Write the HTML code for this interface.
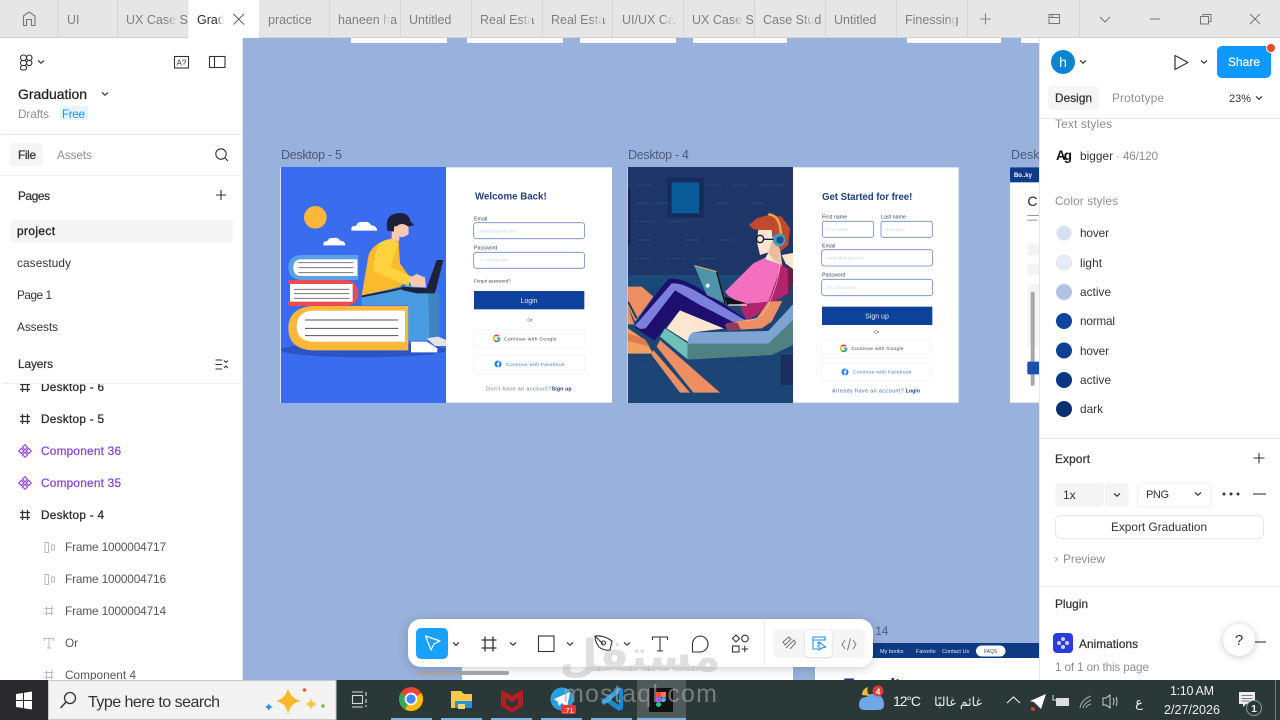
<!DOCTYPE html>
<html lang="en"><head><meta charset="utf-8"><title>Figma - Graduation</title>
<style>
html,body{margin:0;padding:0;width:1280px;height:720px;overflow:hidden;background:#98b2dd}
svg{display:block;position:absolute;left:0;top:0}
text{font-family:"Liberation Sans","DejaVu Sans",sans-serif;font-size:11.8px;fill:#333;white-space:pre}
.g{fill:#8f8f8f}.m{stroke:#333;stroke-width:.25}.b{font-weight:bold}
.tab{fill:#7f7f7f;font-size:12.5px}
.i{fill:none;stroke:#333;stroke-width:1.1}
.li{fill:none;stroke:#bbb;stroke-width:1}
.f{fill:#2e2e2e;stroke:#2e2e2e;stroke-width:.3}
.c{fill:#8a3fe0;stroke:#8a3fe0;stroke-width:.25}
.u{fill:#4a4a4a;font-size:15px}
.bl{fill:#3b82d6;font-size:15px}
.ph{fill:#cdd7e8;font-size:14px}
.lb{fill:#3a4a66;font-size:16px}
.w{fill:#fff}
</style></head><body>
<svg width="1280" height="720" viewBox="0 0 1280 720" xmlns="http://www.w3.org/2000/svg">
<defs>
<path id="ch" d="M-3-1.600 0 1.200 3-1.600" fill="none" stroke="#333" stroke-width="1.200"/>
<g id="fr"><path d="M-2.500-5V5M2.500-5V5M-5-2.500H5M-5 2.500H5" fill="none" stroke="#333" stroke-width="1.300"/></g>
<g id="frb"><path d="M-4-7.500V7.500M4-7.500V7.500M-7.500-4H7.500M-7.500 4H7.500" fill="none" stroke="#333" stroke-width="1.300"/></g>
<g id="frl"><path d="M-2.500-4.500V4.500M2.500-4.500V4.500M-4.500-2.500H4.500M-4.500 2.500H4.500" fill="none" stroke="#bbb" stroke-width="1"/></g>
<g id="cmp"><g fill="none" stroke="#8a3fe0" stroke-width="1.100"><rect x="-1.800" y="-5.500" width="3.600" height="3.600" transform="rotate(45 0 -3.700)"/><rect x="-1.800" y="1.900" width="3.600" height="3.600" transform="rotate(45 0 3.700)"/><rect x="-5.500" y="-1.800" width="3.600" height="3.600" transform="rotate(45 -3.700 0)"/><rect x="1.900" y="-1.800" width="3.600" height="3.600" transform="rotate(45 3.700 0)"/></g></g>
<g id="gg" fill="none" stroke-width="5"><path d="M9 0A9 9 0 0 1-6.400 6.400" stroke="#34a853"/><path d="M-6.400 6.400A9 9 0 0 1-6.400-6.400" stroke="#fbbc05"/><path d="M-6.400-6.400A9 9 0 0 1 6.400-6.400" stroke="#ea4335"/><path d="M9 0H1" stroke="#4285f4"/></g>
<g id="fb"><circle r="10.500" fill="#1877f2"/><path d="M2 10V2H5L5.500-1.500H2V-3.500Q2-5 3.600-5H5.500V-8H2.500Q-1.500-8-1.500-4V-1.500H-4.500V2H-1.500V10Z" fill="#fff"/></g>
<g id="clo"><path d="M0 0Q-1-8 7-7Q9-14 18-13Q26-15 30-8Q38-8 39 0Z" fill="#fff"/></g>
<linearGradient id="fd" x1="0" x2="1" y1="0" y2="0"><stop offset="0" stop-color="#e6e6e6" stop-opacity="0"/><stop offset="1" stop-color="#e6e6e6"/></linearGradient>
<linearGradient id="fw" x1="0" x2="1" y1="0" y2="0"><stop offset="0" stop-color="#fff" stop-opacity="0"/><stop offset="1" stop-color="#fff"/></linearGradient>
<clipPath id="cv"><rect x="243" y="38" width="796" height="642"/></clipPath>
<clipPath id="cl"><rect x="0" y="384" width="242" height="296"/></clipPath>
<clipPath id="cr"><rect x="1040" y="119" width="240" height="561"/></clipPath>
<clipPath id="p1"><rect x="3" y="-99" width="495" height="708"/></clipPath>
<clipPath id="p2"><rect x="9" y="6" width="495" height="708"/></clipPath>
</defs>

<!-- canvas -->
<rect x="243" y="38" width="796" height="642" fill="#98b2dd"/>
<g clip-path="url(#cv)">
<g fill="#fff"><rect x="351" y="38" width="96" height="5"/><rect x="467" y="38" width="96" height="5"/><rect x="580" y="38" width="96" height="5"/><rect x="693" y="38" width="94" height="5"/><rect x="907" y="38" width="94" height="5"/><rect x="1021" y="38" width="18" height="5"/></g>
<text x="281" y="159" style="fill:#4a5b78;font-size:12.500px" textLength="61">Desktop - 5</text>
<text x="628" y="159" style="fill:#4a5b78;font-size:12.500px" textLength="61">Desktop - 4</text>
<text x="1011" y="159" style="fill:#4a5b78;font-size:12.500px">Desktop - 3</text>

<!-- Frame 1 art -->
<g transform="translate(270 145) scale(.33333)">
<rect x="31" y="67" width="995" height="706" fill="#fff"/>
</g>
<g transform="translate(280 200) scale(.33333)" clip-path="url(#p1)">
<rect x="3" y="-99" width="495" height="708" fill="#396cee"/>
<ellipse cx="250" cy="450" rx="250" ry="22" fill="#2b55c6"/>
<circle cx="106" cy="52" r="34" fill="#fdb73b"/>
<use href="#clo" transform="translate(214 92) scale(2)"/>
<use href="#clo" transform="translate(130 136) scale(1.700)"/>
<path d="M235 165H65Q25 167 25 202Q25 238 65 240H235Z" fill="#5aa0e2"/>
<path d="M232 178H60Q40 181 40 203Q40 226 60 228H232Z" fill="#fff"/>
<path d="M55 188H220M55 203H220M55 218H220" stroke="#777" stroke-width="3"/>
<path d="M25 240H195Q235 243 235 280Q235 316 195 318H25V305H205Q220 300 220 280Q220 257 205 252H25Z" fill="#ef4a50"/>
<rect x="30" y="252" width="188" height="53" fill="#fff"/>
<path d="M42 268H208M42 281H208M42 295H208" stroke="#777" stroke-width="3"/>
<path d="M385 318H95Q25 325 25 385Q25 445 95 451H385Z" fill="#fdb73b"/>
<path d="M375 332H95Q50 337 50 380Q50 420 95 425H375Z" fill="#fff"/>
<path d="M75 360H355M75 385H355M75 407H355" stroke="#555" stroke-width="3"/>
<path d="M245 290 385 255 470 275 478 410 440 422H385V316H245Z" fill="#4a9be0"/>
<path d="M445 280H478V410L448 412Z" fill="#3e83c2"/>
<path d="M393 425H440L472 445V457H393Z" fill="#fff"/>
<path d="M440 415 475 410 498 420V438H465Z" fill="#e4e4e4"/>
<path d="M245 286 265 170Q275 125 355 110L360 190 392 235 360 260 320 270Z" fill="#fbb92c"/>
<path d="M298 130Q275 180 282 215L385 258 395 230 332 200 355 130Q325 110 298 130Z" fill="#fdd23f"/>
<path d="M245 287 330 270 365 262 366 267 330 276 246 292Z" fill="#202338"/>
<path d="M470 180H490L465 280H410L365 270V260L440 265Z" fill="#1d2238"/>
<path d="M385 235 410 222 435 232 438 262 395 260Z" fill="#fbc9b0"/>
<path d="M335 70 385 62 386 102Q370 115 358 110V122H335Z" fill="#fbc9b0"/>
<path d="M322 92Q313 45 350 40Q385 34 392 65L403 75 385 80Q365 65 352 78L342 80 342 95Z" fill="#1e2138"/>
</g>
<!-- Frame 1 form -->
<g transform="translate(270 145) scale(.33333)">
<text x="615" y="164" class="b" style="font-size:29px;fill:#1f3f80" textLength="215">Welcome Back!</text>
<text x="612" y="226" class="lb">Email</text>
<rect x="611" y="233" width="333" height="48" rx="8" fill="#fff" stroke="#6d8cbd" stroke-width="2.500"/>
<text x="625" y="262" class="ph">name@gmail.com</text>
<text x="612" y="314" class="lb">Password</text>
<rect x="611" y="322" width="333" height="48" rx="8" fill="#fff" stroke="#6d8cbd" stroke-width="2.500"/>
<text x="630" y="350" class="ph">6+ characters</text>
<text x="612" y="412" style="font-size:13px;fill:#334" textLength="110">Forgot password?</text>
<rect x="612" y="438" width="331" height="55" fill="#0e419c"/>
<text x="777" y="474" text-anchor="middle" style="font-size:21px;fill:#e2e8f4">Login</text>
<text x="780" y="530" text-anchor="middle" style="font-size:14px;fill:#444">Or</text>
<rect x="612" y="553" width="332" height="54" rx="5" fill="#fff" stroke="#f1f1f1" stroke-width="2"/>
<use href="#gg" transform="translate(680 580)"/>
<text x="702" y="586" class="u" textLength="158">Continue with Google</text>
<rect x="612" y="630" width="332" height="55" rx="5" fill="#fff" stroke="#f1f1f1" stroke-width="2"/>
<use href="#fb" transform="translate(684 657)"/>
<text x="708" y="663" class="bl" textLength="175">Continue with Facebook</text>
<text x="648" y="737" style="font-size:16px;fill:#6a7f9e" textLength="196">Don't have an account?</text>
<text x="845" y="737" class="b" style="font-size:16px;fill:#1f3f80" textLength="60">Sign up</text>
</g>

<!-- Frame 2 art -->
<g transform="translate(620 145) scale(.33333)">
<rect x="23" y="67" width="993" height="706" fill="#fff"/>
</g>
<g transform="translate(625 165) scale(.33333)" clip-path="url(#p2)">
<rect x="9" y="6" width="495" height="708" fill="#1f3768"/>
<rect x="9" y="330" width="495" height="384" fill="#1c4576"/>
<rect x="9" y="330" width="495" height="40" fill="#1c4a78"/>
<rect x="9" y="72" width="7" height="170" fill="#14224c"/>
<rect x="127" y="38" width="109" height="120" fill="#172b5c"/>
<rect x="140" y="52" width="82" height="93" fill="#0a5b99"/>
<path d="M30 60H80M240 60H290M320 60H370M410 60H470M30 115H75M80 115H130M270 115H320M370 115H420M30 170H90M130 170H180M30 225H80M180 225H230M280 225H330M30 280H80M125 280H180M220 280H280M40 605H90M320 605H370M40 660H90M240 660H290" stroke="#27447a" stroke-width="3"/>
<rect x="467" y="570" width="37" height="90" fill="#1a2f60"/>
<!-- orange floor -->
<path d="M9 365H50L85 395 30 470 9 425Z" fill="#ee8f63"/>
<path d="M9 410 35 460" stroke="#1c3a68" stroke-width="6"/>
<path d="M9 425 28 478H9Z" fill="#ee8f63"/>
<path d="M85 555 195 683H165L80 570Z" fill="#ee8f63"/>
<path d="M105 525 285 683H205L95 545Z" fill="#ee8f63"/>
<!-- lounger -->
<path d="M120 490 188 535V583L105 515Z" fill="#6fc0b8"/>
<path d="M188 535H430L504 465V540L440 570 188 584Z" fill="#4f8082"/>
<path d="M188 520Q190 502 205 502L430 498 504 418V465L430 536H188Z" fill="#7ea4d4"/>
<path d="M125 490 165 435 300 490 205 502Q192 505 188 530Z" fill="#fde6d0"/>
<!-- pants -->
<path d="M28 485Q80 400 130 342Q170 335 235 378L360 460 325 475 300 492 165 436 88 527 55 505Z" fill="#1c0f6e"/>
<path d="M30 482 140 355Q170 352 225 385L365 468 322 470 225 420 150 376 62 490 45 492Z" fill="#7c80dc"/>
<!-- shoe -->
<path d="M9 490 60 525 85 566H9Z" fill="#f2a05f"/>
<path d="M9 505 60 522 75 545 9 528Z" fill="#d96a4a" opacity=".7"/>
<!-- cushion behind -->
<path d="M470 270 504 264V312L482 296Z" fill="#fde6d0"/>
<!-- shirt -->
<path d="M470 300 490 312 490 385 430 420 395 450 365 466 345 425 430 405Z" fill="#b3246f"/>
<path d="M300 380 385 295 420 278 470 300 430 410 350 418 310 392Z" fill="#f46fbd"/>
<path d="M487 298 504 322V352L482 420 490 380Z" fill="#6b1f3f"/>
<!-- laptop -->
<path d="M208 302 275 320 300 415 245 390Z" fill="#4d94ab"/>
<path d="M208 302 275 320" stroke="#e8b25a" stroke-width="3"/>
<path d="M275 320 300 415" stroke="#111" stroke-width="4"/>
<circle cx="248" cy="362" r="6" fill="#e8f2f4"/>
<path d="M298 395 365 415 308 420Z" fill="#111"/>
<path d="M310 420H366" stroke="#fde6d0" stroke-width="4"/>
<!-- arm -->
<path d="M430 410 472 408 440 470 410 490 310 496 300 480 330 470 395 460Z" fill="#ee8f63"/>
<path d="M300 478Q315 468 338 474L348 494 310 496Z" fill="#8b3b5c"/>
<!-- head -->
<path d="M400 190 440 195 447 250 472 300 420 282 430 262 405 270 396 232Z" fill="#fde6d0"/>
<path d="M445 215 465 250 472 300 445 285 430 262Z" fill="#eebb9e"/>
<path d="M372 180 395 160 430 150 470 155 495 190 490 240 468 258 445 215 440 195 400 195 385 192Z" fill="#c0492e"/>
<path d="M430 148Q466 150 468 210" fill="none" stroke="#e0ad4f" stroke-width="7"/>
<circle cx="463" cy="225" r="19" fill="#3f9fc6"/><circle cx="465" cy="225" r="11" fill="#1f4f8a"/>
<circle cx="405" cy="222" r="11" fill="none" stroke="#16163a" stroke-width="4"/>
<path d="M416 223H446" stroke="#16163a" stroke-width="4"/>
<path d="M465 265Q470 340 425 430Q400 470 360 465" fill="none" stroke="#fde6d0" stroke-width="1.500"/>
</g>
<!-- Frame 2 form + Frame 3 -->
<g transform="translate(620 145) scale(.33333)">
<text x="606" y="165" class="b" style="font-size:29px;fill:#1f3f80" textLength="271">Get Started for free!</text>
<text x="606" y="220" class="lb">First name</text><text x="783" y="220" class="lb">Last name</text>
<rect x="607" y="229" width="154" height="48" rx="6" fill="#fff" stroke="#6d8cbd" stroke-width="2.500"/>
<rect x="783" y="229" width="154" height="48" rx="6" fill="#fff" stroke="#6d8cbd" stroke-width="2.500"/>
<text x="618" y="258" class="ph">First name</text><text x="794" y="258" class="ph">last name</text>
<text x="606" y="307" class="lb">Email</text>
<rect x="605" y="314" width="333" height="49" rx="8" fill="#fff" stroke="#6d8cbd" stroke-width="2.500"/>
<text x="618" y="344" class="ph">name@gmail.com</text>
<text x="606" y="394" class="lb">Password</text>
<rect x="605" y="403" width="333" height="49" rx="8" fill="#fff" stroke="#6d8cbd" stroke-width="2.500"/>
<text x="622" y="432" class="ph">6+ characters</text>
<rect x="606" y="485" width="331" height="55" fill="#0e419c"/>
<text x="771" y="520" text-anchor="middle" style="font-size:21px;fill:#e2e8f4">Sign up</text>
<text x="770" y="565" text-anchor="middle" style="font-size:14px;fill:#444">Or</text>
<rect x="604" y="583" width="330" height="54" rx="5" fill="#fff" stroke="#f1f1f1" stroke-width="2"/>
<use href="#gg" transform="translate(671 610)"/>
<text x="694" y="615" class="u" textLength="157">Continue with Google</text>
<rect x="604" y="654" width="330" height="54" rx="5" fill="#fff" stroke="#f1f1f1" stroke-width="2"/>
<use href="#fb" transform="translate(675 681)"/>
<text x="698" y="686" class="bl" textLength="176">Continue with Facebook</text>
<text x="636" y="743" style="font-size:16px;fill:#4a6a9e" textLength="215">Already have an account?</text>
<text x="857" y="743" class="b" style="font-size:16px;fill:#1f3f80" textLength="43">Login</text>
<rect x="1170" y="67" width="120" height="706" fill="#fff"/>
<rect x="1170" y="67" width="120" height="45" fill="#0d3a8a"/>
<text x="1182" y="96" class="b" style="font-size:18px;fill:#fff">Bo..ky</text>
<text x="1222" y="183" style="font-size:42px;fill:#222">C</text>
<rect x="1222" y="210" width="40" height="3" fill="#999"/><rect x="1222" y="224" width="30" height="3" fill="#999"/>
<rect x="1222" y="295" width="40" height="36" fill="#f3f3f3"/><rect x="1222" y="355" width="40" height="36" fill="#f3f3f3"/>
<rect x="1222" y="417" width="40" height="190" fill="#f5f5f5"/>
<rect x="1232" y="440" width="12" height="283" rx="6" fill="#a9a9a9"/>
<rect x="1222" y="650" width="40" height="38" rx="4" fill="#1b4fb0"/>
</g>

<!-- bottom frames -->
<rect x="462" y="667" width="331" height="13" fill="#fff"/>
<rect x="815" y="644" width="224" height="36" fill="#fff"/>
<rect x="815" y="643" width="224" height="15" fill="#0d3a82"/>
<text x="880" y="653" style="font-size:5.500px;fill:#dfe6f2">My books</text>
<text x="916" y="653" style="font-size:5.500px;fill:#dfe6f2">Favorite</text>
<text x="942" y="653" style="font-size:5.500px;fill:#dfe6f2">Contact Us</text>
<rect x="976" y="645.500" width="29.500" height="11" rx="5.500" fill="#fff"/>
<text x="990.500" y="653" text-anchor="middle" style="font-size:5px;fill:#33518c">FAQS</text>
<text x="868" y="635" style="fill:#4a5b78">- 14</text>
<text x="843" y="692" class="b" style="font-size:19px;fill:#123a86" textLength="77">Favorites</text>
<rect x="418" y="671" width="91" height="4" rx="2" fill="#aaa"/>
</g>

<!-- toolbar -->
<rect x="408" y="619" width="465" height="48" rx="13" fill="#fff" style="filter:drop-shadow(0 2px 5px rgba(0,0,0,.18))"/>
<rect x="416" y="628" width="32" height="31" rx="5" fill="#18a0fb"/>
<path d="M425.500 636 440 641 434 644 431 650Z" fill="none" stroke="#fff" stroke-width="1.200" stroke-linejoin="round"/>
<use href="#ch" x="456" y="644"/><use href="#ch" x="513" y="644"/><use href="#ch" x="570" y="644"/><use href="#ch" x="627" y="644"/>
<use href="#frb" x="489" y="644"/>
<rect x="538.500" y="636" width="15.500" height="15.500" class="i"/>
<path d="M595 636Q604 635 612 641L610 650Q604 651 599 647Q595 642 595 636ZM595 636 603 644" class="i"/><circle cx="603.500" cy="643" r="2" class="i"/>
<path d="M652.500 640V637H667.500V640M660 637V651M657 651H663" class="i" stroke-width="1.300"/>
<path d="M700 636A8 8 0 1 1 700 652H692.500V644A8 8 0 0 1 700 636Z" class="i"/>
<path d="M736 635 739.500 638.500 736 642 732.500 638.500Z" class="i"/><circle cx="745" cy="638.500" r="3.300" class="i"/><rect x="732.500" y="646" width="6.500" height="6" class="i"/><path d="M741.500 649H748M744.800 645.800V652.200" class="i"/>
<path d="M764.500 620V666" stroke="#eee"/>
<rect x="773" y="629" width="92" height="29" rx="6" fill="#f5f5f5"/>
<rect x="805" y="630" width="27" height="27" rx="4" fill="#fff" style="filter:drop-shadow(0 1px 1px rgba(0,0,0,.12))"/>
<path d="M783 642 789 637 791 639 785 645ZM786 648 794 640 795.500 643 790 649" fill="none" stroke="#777" stroke-width="1.100"/>
<path d="M813 640V637H825V640H813V649H818M817 643H821M817 646H818M819 642V650L822 648 825.500 647Z" fill="none" stroke="#1a8fe8" stroke-width="1.100"/>
<path d="M845 640 842 644.500 845 649M853 640 856 644.500 853 649M850.500 638.500 847.500 650.500" fill="none" stroke="#777" stroke-width="1"/>

<!-- left panel -->
<rect x="0" y="38" width="242" height="642" fill="#fff"/>
<rect x="242" y="38" width="1" height="642" fill="#e6e6e6"/>
<g fill="none" stroke="#333" stroke-width="1.100"><rect x="20.500" y="55" width="6" height="5.500" rx="2.700"/><rect x="26.500" y="55" width="5.500" height="5.500" rx="2.700"/><rect x="20.500" y="60.500" width="6" height="5" rx="2.500"/><circle cx="29.200" cy="63" r="2.700"/><rect x="20.500" y="65.500" width="6" height="4.500" rx="2.200"/></g>
<use href="#ch" x="41" y="62"/>
<rect x="174.500" y="56.500" width="14" height="11.500" class="i"/><text x="176.500" y="65.500" style="font-size:8px">A?</text>
<rect x="209.500" y="56.500" width="15.500" height="11" class="i"/><path d="M214.500 56.500V67.500" class="i"/>
<text x="18" y="99" style="font-size:14px;fill:#222;stroke:#222;stroke-width:.25" textLength="69">Graduation</text>
<use href="#ch" x="105" y="94"/>
<text x="18" y="118" class="g" textLength="31">Drafts</text>
<rect x="60" y="106" width="28" height="14" rx="2" fill="#e5f4ff"/>
<text x="62" y="118" style="fill:#0d99ff" textLength="23">Free</text>
<rect x="1" y="134" width="240" height="1" fill="#e8e8e8"/>
<rect x="10" y="143" width="33" height="23" rx="4" fill="#f5f5f5"/>
<text x="18" y="159" class="m" textLength="18">File</text>
<text x="57" y="159" class="g" textLength="35">Assets</text>
<circle cx="221" cy="154" r="5.200" class="i" stroke-width="1.200"/><path d="M225 158 228 161" class="i" stroke-width="1.200"/>
<rect x="1" y="175" width="240" height="1" fill="#f0f0f0"/>
<text x="18" y="200" class="m" textLength="32">Pages</text>
<path d="M221 190V200M216 195H226" class="i"/>
<rect x="10" y="220" width="223" height="23" rx="4" fill="#f5f5f5"/>
<text x="17" y="235" class="m" style="fill:#222;stroke-width:.4" textLength="38">project</text>
<text x="17" y="267" textLength="54">casestudy</text>
<text x="17" y="299" textLength="35">Page 1</text>
<text x="17" y="331" textLength="41">Assests</text>
<text x="18" y="368" class="m" textLength="35">Layers</text>
<path d="M215.500 360H222M215.500 364.500H222M215.500 369H222M224 360.500 226 362.500 228 360.500M224 368 226 366 228 368" class="i"/>
<rect x="1" y="383" width="240" height="1" fill="#ececec"/>
<g clip-path="url(#cl)">
<use href="#fr" x="25" y="387"/><text x="41" y="391" class="f" textLength="63">Desktop - 6</text>
<use href="#fr" x="25" y="419"/><text x="41" y="423" class="f" textLength="63">Desktop - 5</text>
<use href="#cmp" x="25" y="451"/><text x="41" y="455" class="c" textLength="80">Component 36</text>
<use href="#cmp" x="25" y="483"/><text x="41" y="487" class="c" textLength="80">Component 35</text>
<use href="#fr" x="25" y="515"/><text x="41" y="519" class="f" textLength="63">Desktop - 4</text>
<path d="M45 542.500H48.500V552.500H45ZM51.500 545H54.500V550H51.500Z" class="li"/><text x="65" y="551" style="fill:#555" textLength="101">Frame 1000004717</text>
<path d="M45 574.500H48.500V584.500H45ZM51.500 577H54.500V582H51.500Z" class="li"/><text x="65" y="583" style="fill:#555" textLength="101">Frame 1000004716</text>
<use href="#frl" x="49" y="611"/><text x="65" y="615" style="fill:#555" textLength="101">Frame 1000004714</text>
<path d="M44.500 641V638.500H53.500V641M49 638.500V648M47 648H51" class="li"/><text x="65" y="647" style="fill:#555">Or</text>
<use href="#frl" x="49" y="675"/><text x="65" y="679" style="fill:#555" textLength="71">Component 4</text>
</g>

<!-- right panel -->
<rect x="1039" y="38" width="241" height="642" fill="#fff"/>
<rect x="1039" y="38" width="1" height="642" fill="#e6e6e6"/>
<circle cx="1063" cy="62" r="12" fill="#0a85d1"/>
<text x="1063" y="67" text-anchor="middle" style="font-size:14px;fill:#fff">h</text>
<use href="#ch" x="1083" y="62"/>
<path d="M1175 55.500 1188 62.500 1175 69.500Z" fill="none" stroke="#333" stroke-width="1.200" stroke-linejoin="round"/>
<use href="#ch" x="1204" y="62"/>
<rect x="1217" y="46" width="54" height="32" rx="5" fill="#0d99ff"/>
<text x="1244" y="66" text-anchor="middle" style="fill:#fff;stroke:#fff;stroke-width:.2;font-size:12px">Share</text>
<circle cx="1271" cy="48" r="5" fill="#fff"/><circle cx="1271" cy="48" r="4" fill="#f24822"/>
<rect x="1048" y="86" width="51" height="24" rx="4" fill="#f5f5f5"/>
<text x="1055" y="102" class="m" textLength="37">Design</text>
<text x="1112" y="102" class="g" textLength="52">Prototype</text>
<text x="1229" y="102" style="font-size:11px" textLength="22">23%</text>
<use href="#ch" x="1259" y="98"/>
<rect x="1040" y="118" width="240" height="1" fill="#e8e8e8"/>
<g clip-path="url(#cr)">
<text x="1055" y="128" class="g" textLength="57">Text styles</text>
<text x="1056" y="160" class="b" style="font-size:13.500px;fill:#111" textLength="16">Ag</text>
<text x="1080" y="160" textLength="33">bigger</text>
<text x="1116" y="160" class="g" textLength="42">· 46/120</text>
<text x="1055" y="205" class="g" textLength="63">Color styles</text>
<circle cx="1064" cy="233" r="7.500" fill="#d7e0ef" stroke="#eef1f6"/><text x="1080" y="237" textLength="29">hover</text>
<circle cx="1064" cy="262.500" r="7.500" fill="#e6ecf7" stroke="#dfe4ec"/><text x="1080" y="267" textLength="22">light</text>
<circle cx="1064" cy="292" r="8" fill="#b0c3e3"/><text x="1080" y="296" textLength="31">active</text>
<circle cx="1064" cy="321" r="8" fill="#0e45a0"/><text x="1080" y="325" textLength="35">normal</text>
<circle cx="1064" cy="350.500" r="8" fill="#0d3f93"/><text x="1080" y="355" textLength="29">hover</text>
<circle cx="1064" cy="380" r="8" fill="#0b3684"/><text x="1080" y="384" textLength="31">active</text>
<circle cx="1064" cy="409" r="8" fill="#0a2f70"/><text x="1080" y="413" textLength="23">dark</text>
<rect x="1040" y="438" width="240" height="1" fill="#e8e8e8"/>
<text x="1055" y="463" class="m" textLength="35">Export</text>
<path d="M1259 453V463.500M1253.500 458H1264.500" class="i"/>
<rect x="1055" y="483" width="49" height="24" rx="3" fill="#f5f5f5"/>
<rect x="1105" y="483" width="24" height="24" rx="3" fill="#f5f5f5"/>
<text x="1063" y="499" style="font-size:12px">1x</text>
<use href="#ch" x="1117" y="495"/>
<rect x="1137.500" y="483" width="73.500" height="24" rx="4" fill="#fff" stroke="#eee"/>
<text x="1146" y="498" style="font-size:11px" textLength="23">PNG</text>
<use href="#ch" x="1198" y="494"/>
<g fill="#333"><circle cx="1224" cy="494" r="1.500"/><circle cx="1231" cy="494" r="1.500"/><circle cx="1238" cy="494" r="1.500"/></g>
<path d="M1253 494H1266" class="i"/>
<rect x="1055.500" y="515.500" width="208" height="23" rx="5" fill="#fff" stroke="#e8e8e8"/>
<text x="1159" y="531" text-anchor="middle" textLength="96">Export Graduation</text>
<path d="M1055 557 1057.500 559 1055 561.500" fill="none" stroke="#aaa"/>
<text x="1063" y="563" class="g" textLength="42">Preview</text>
<rect x="1040" y="586" width="240" height="1" fill="#eee"/>
<text x="1055" y="608" class="m" textLength="33">Plugin</text>
<rect x="1053" y="633" width="20" height="20" rx="4" fill="#2b3be0"/>
<g fill="#cfd4ff"><circle cx="1063" cy="639" r="2"/><circle cx="1059" cy="643" r="2"/><circle cx="1067" cy="643" r="2"/><circle cx="1063" cy="647" r="2"/></g>
<text x="1079" y="648" class="m" textLength="59">Animations</text>
<text x="1055" y="671" class="g" textLength="94">1 of 1 on this page</text>
<path d="M1255 642H1266" class="i"/>
<circle cx="1239" cy="640" r="16" fill="#fff" style="filter:drop-shadow(0 1px 4px rgba(0,0,0,.22))"/>
<text x="1239" y="645" text-anchor="middle" style="font-size:15px;fill:#333">?</text>
</g>

<!-- top tab bar -->
<rect x="0" y="0" width="1280" height="38" fill="#e6e6e6"/>
<rect x="188.500" y="0" width="70.500" height="38" fill="#fff"/>
<rect x="0" y="37" width="188" height="1" fill="#d2d2d2"/><rect x="259" y="37" width="1021" height="1" fill="#d2d2d2"/>
<g fill="#d6d6d6"><rect x="57.500" width="1" height="37"/><rect x="117" width="1" height="37"/><rect x="329" width="1" height="37"/><rect x="400" width="1" height="37"/><rect x="471" width="1" height="37"/><rect x="542" width="1" height="37"/><rect x="612" width="1" height="37"/><rect x="683" width="1" height="37"/><rect x="754" width="1" height="37"/><rect x="825" width="1" height="37"/><rect x="896" width="1" height="37"/><rect x="967" width="1" height="37"/><rect x="1079" width="1" height="37"/></g>
<path d="M23.500 25.500V16L29 12 35 16V25.500H31.500V19.500H26.500V25.500Z" fill="none" stroke="#777" stroke-width="1.100" stroke-linejoin="round"/>
<text x="67" y="24" class="tab">UI</text>
<text x="126" y="24" class="tab">UX Case S</text><rect x="166" y="5" width="12" height="30" fill="url(#fd)"/>
<text x="197" y="24" style="fill:#2e2e2e;font-size:12.500px">Grad</text><rect x="216" y="5" width="8" height="30" fill="url(#fw)"/>
<path d="M233.500 14 244 24.500M244 14 233.500 24.500" fill="none" stroke="#666" stroke-width="1.100"/>
<text x="268" y="24" class="tab">practice</text>
<text x="338" y="24" class="tab">haneen ha</text><rect x="378" y="5" width="13" height="30" fill="url(#fd)"/>
<text x="409" y="24" class="tab">Untitled</text>
<text x="480" y="24" class="tab">Real Esta</text><rect x="520" y="5" width="12" height="30" fill="url(#fd)"/>
<text x="551" y="24" class="tab">Real Esta</text><rect x="591" y="5" width="12" height="30" fill="url(#fd)"/>
<text x="622" y="24" class="tab">UI/UX Ca</text><rect x="662" y="5" width="12" height="30" fill="url(#fd)"/>
<text x="692" y="24" class="tab">UX Case S</text><rect x="732" y="5" width="12" height="30" fill="url(#fd)"/>
<text x="763" y="24" class="tab">Case Stud</text><rect x="803" y="5" width="12" height="30" fill="url(#fd)"/>
<text x="834" y="24" class="tab">Untitled</text>
<text x="905" y="24" class="tab">Finessing</text><rect x="948" y="5" width="8" height="30" fill="url(#fd)"/>
<path d="M985.500 13.500V24.500M980 19H991" fill="none" stroke="#888" stroke-width="1.100"/>
<g fill="none" stroke="#777" stroke-width="1"><rect x="1049" y="14.500" width="10.500" height="9"/><path d="M1049 17.500H1059.500M1052 14.500V17.500"/><path d="M1100 17 1105 22 1110 17"/><path d="M1150 19H1160"/><rect x="1200.500" y="16.500" width="8" height="7.500"/><path d="M1203 16.500V14.500H1211V21.500H1208.500"/><path d="M1250 14 1260 24M1260 14 1250 24"/></g>

<!-- taskbar -->
<rect x="0" y="680" width="1280" height="40" fill="#2a3838"/>
<rect x="0" y="680" width="48" height="40" fill="#29282c"/>
<g fill="#fff"><path d="M16 694 23 693V700H16ZM24 692.800 32 691.500V700H24ZM16 701H23V708L16 707ZM24 701H32V709.500L24 708.200Z"/></g>
<rect x="48.500" y="680.500" width="287.500" height="39" fill="#f3f3f3" stroke="#c8c8c8"/>
<circle cx="70" cy="698" r="5.500" fill="none" stroke="#333" stroke-width="1.300"/><path d="M66 702 60.500 708" stroke="#333" stroke-width="1.400"/>
<text x="88" y="707" style="font-size:16px;fill:#333" textLength="132">Type here to search</text>
<path d="M288 688Q290 698 301 701Q290 703 288 714Q286 703 276 701Q286 698 288 688Z" fill="#fbb829"/>
<path d="M311 698Q312 703 317 704Q312 705 311 710Q310 705 305 704Q310 703 311 698Z" fill="#fbc43a"/>
<path d="M269 703Q269 706 273 707Q269 708 269 711Q268 708 265 707Q268 706 269 703Z" fill="#1d9be0"/>
<circle cx="304.500" cy="690" r="1.800" fill="#e8602c"/><circle cx="323" cy="706" r="1.700" fill="#7cba3d"/>
<g fill="none" stroke="#d8d8d8" stroke-width="1.100"><rect x="352.500" y="695.500" width="10" height="8"/><path d="M352 692H363M352 707H363M366 692V696M366 699V703M366 705V707"/></g>
<circle cx="411" cy="699" r="12" fill="#ea4335"/>
<path d="M411 699 421.400 693A12 12 0 0 1 405 709.400Z" fill="#fbbc05"/>
<path d="M411 699 405 709.400A12 12 0 0 1 400.600 693Z" fill="#34a853"/>
<circle cx="411" cy="699" r="5.500" fill="#4285f4" stroke="#fff" stroke-width="1.800"/>
<path d="M451 691H461L464 694H472V708H451Z" fill="#f7c948"/><rect x="455" y="701" width="17" height="7" fill="#2d8fd5"/><rect x="458" y="704" width="7" height="5" fill="#f7d56e"/>
<path d="M501 690 508 693 512 696 516 693 523 690V706L512 713 501 706Z" fill="#b01e24"/><path d="M506 698V704L512 708 518 704V698L512 703Z" fill="#2a3838"/>
<circle cx="562" cy="699" r="11.500" fill="#29a0dc"/>
<path d="M554 699 570 692 567 707 562 703 559 706 558 702Z" fill="#fff"/>
<rect x="561" y="705" width="15" height="9" rx="2" fill="#e53935"/>
<text x="568.500" y="713" text-anchor="middle" style="font-size:7.500px;fill:#fff">.71</text>
<path d="M619 687 623 689V709L619 711 603 700 607 697 619 705V693L607 702 603 699Z" fill="#1a8ad4"/><path d="M619 687 601 702 604 705 619 693Z" fill="#2ba4ee"/>
<rect x="637" y="680" width="49" height="40" fill="#4f5a5a"/>
<rect x="649" y="688" width="24" height="24" fill="#111"/>
<rect x="656" y="692" width="5" height="5" fill="#f24e1e"/><rect x="661" y="692" width="5" height="5" fill="#ff7262"/><rect x="656" y="697" width="5" height="5" fill="#a259ff"/><circle cx="663.500" cy="699.500" r="2.500" fill="#1abcfe"/><circle cx="658.500" cy="704.500" r="2.500" fill="#0acf83"/>
<g fill="#7db6e6"><rect x="391" y="718" width="41" height="2"/><rect x="441" y="718" width="41" height="2"/><rect x="491" y="718" width="41" height="2"/><rect x="541" y="718" width="41" height="2"/><rect x="591" y="718" width="41" height="2"/><rect x="637" y="718" width="49" height="2"/></g>
<!-- watermark -->
<text x="640" y="671" text-anchor="middle" style="font-family:'DejaVu Sans',sans-serif;font-size:44px;font-weight:bold;fill:rgba(150,150,150,.3)">مستقل</text>
<text x="640" y="702" text-anchor="middle" style="font-size:25px;fill:rgba(170,170,170,.6)" textLength="154">mostaql.com</text>
<!-- tray -->
<path d="M859 705Q859 697 867 697Q870 692 876 695Q884 695 884 705Q884 710 878 710H865Q859 710 859 705Z" fill="#6da7e6"/>
<path d="M862 695Q862 689 868 687Q866 692 870 696Z" fill="#f7b733"/>
<circle cx="878" cy="691" r="5.500" fill="#e53935"/><text x="878" y="694.500" text-anchor="middle" class="b" style="font-size:8.500px;fill:#fff">4</text>
<text x="893" y="706" style="font-size:14px;fill:#eee" textLength="28">12°C</text>
<text x="982" y="706" text-anchor="start" direction="rtl" style="font-family:'DejaVu Sans',sans-serif;font-size:12.500px;fill:#eee">غائم غالبًا</text>
<path d="M1007 703 1013.500 697 1020 703" fill="none" stroke="#eee" stroke-width="1.100"/>
<path d="M1030 701 1046 694 1041 709 1037 705 1034 702Z" fill="#fff"/><circle cx="1033" cy="709" r="2" fill="#e53935"/>
<rect x="1056" y="698" width="13" height="8" fill="#ddd"/><path d="M1053 695V700H1056" fill="none" stroke="#ddd"/>
<path d="M1080 708Q1081 700 1091 696M1083 708Q1084 703 1091 700M1086 708Q1087 705 1091 704" fill="none" stroke="#aaa"/>
<path d="M1103 698H1106L1110 695V708L1106 705H1103ZM1113 698Q1115 701 1113 705M1116 697Q1118 701 1116 706" fill="none" stroke="#ddd" stroke-width=".9"/>
<text x="1139" y="707" text-anchor="middle" style="font-family:'DejaVu Sans',sans-serif;font-size:13px;fill:#eee">ع</text>
<text x="1192" y="695" text-anchor="middle" style="font-size:12.500px;fill:#eee" textLength="44">1:10 AM</text>
<text x="1192" y="714" text-anchor="middle" style="font-size:12.500px;fill:#eee" textLength="56">2/27/2026</text>
<path d="M1239 692H1255V704H1246L1243 707V704H1239Z" fill="#eee"/><path d="M1241.500 695.500H1252.500M1241.500 698.500H1252.500M1241.500 701H1249" stroke="#555" stroke-width=".8"/>
<circle cx="1254" cy="708" r="7.500" fill="#2a3838" stroke="#999"/><text x="1254" y="712" text-anchor="middle" class="b" style="font-size:10.500px;fill:#eee">1</text>
<rect x="1275" y="680" width="1" height="40" fill="#777"/>
</svg>
</body></html>
